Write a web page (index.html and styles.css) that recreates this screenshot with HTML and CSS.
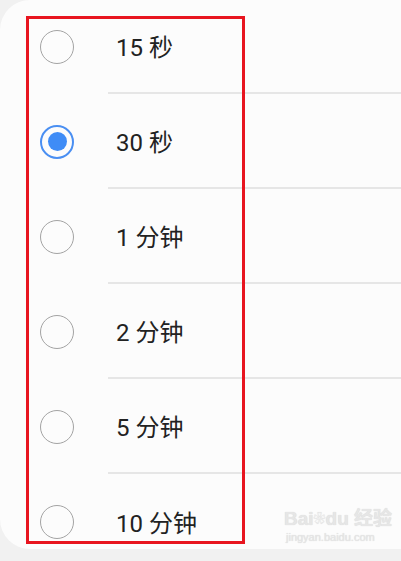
FILE: index.html
```html
<!DOCTYPE html>
<html lang="zh-CN">
<head>
  <meta charset="UTF-8" />
  <meta name="viewport" content="width=device-width, initial-scale=1.0" />
  <title>选择时长</title>
  <link rel="stylesheet" href="styles.css">
</head>
<body>
  <div class="card">
    <ul class="options">
      <li class="option">
        <span class="radio"></span>
        <span class="label">15 秒</span>
      </li>
      <li class="option">
        <span class="radio checked"></span>
        <span class="label">30 秒</span>
      </li>
      <li class="option">
        <span class="radio"></span>
        <span class="label">1 分钟</span>
      </li>
      <li class="option">
        <span class="radio"></span>
        <span class="label">2 分钟</span>
      </li>
      <li class="option">
        <span class="radio"></span>
        <span class="label">5 分钟</span>
      </li>
      <li class="option">
        <span class="radio"></span>
        <span class="label">10 分钟</span>
      </li>
    </ul>

    <div class="highlight"></div>
  </div>

  <div class="watermark">
    <div class="wm-logo">Bai<span class="paw">❀</span>du 经验</div>
    <div class="wm-url">jingyan.baidu.com</div>
  </div>
</body>
</html>
```

FILE: styles.css
```css
html, body {
  margin: 0;
  padding: 0;
  height: 100%;
}
body {
  position: relative;
  background: #f1f1f1;
  font-family: Roboto, "Noto Sans CJK SC", sans-serif;
  color: #222;
  overflow: hidden;
}
.card {
  position: relative;
  height: 549px;
  background: #fcfcfc;
  border-radius: 30px 0 0 30px;
  overflow: hidden;
}
.options {
  list-style: none;
  margin: -1px 0 0 0;
  padding: 0;
}
.option {
  display: flex;
  align-items: stretch;
  height: 95px;
}
.radio {
  flex: none;
  align-self: center;
  box-sizing: border-box;
  width: 34px;
  height: 34px;
  margin: 0 34px 0 40px;
  border: 1.5px solid #a3a3a3;
  border-radius: 50%;
  display: flex;
  align-items: center;
  justify-content: center;
}
.radio.checked {
  border: 2px solid #4a8ff2;
}
.radio.checked::after {
  content: "";
  width: 19px;
  height: 19px;
  border-radius: 50%;
  background: #3f8cf6;
}
.label {
  flex: 1;
  display: flex;
  align-items: center;
  padding-left: 8px;
  font-size: 24px;
  border-bottom: 2px solid #e6e6e6;
}
.option:last-child .label {
  border-bottom: none;
}
.highlight {
  position: absolute;
  left: 26px;
  top: 16px;
  width: 213px;
  height: 522px;
  border: 3px solid #e8151f;
}
.watermark {
  position: absolute;
  left: 284px;
  top: 508px;
  white-space: nowrap;
  color: #e6e6e6;
  text-shadow: 0 0 1px #d2d2d2;
  font-family: "Liberation Sans", "Noto Sans CJK SC", sans-serif;
}
.wm-logo {
  font-size: 19px;
  font-weight: bold;
  line-height: 22px;
}
.paw {
  font-size: 12px;
  vertical-align: top;
}
.wm-url {
  font-size: 11px;
  line-height: 14px;
  padding-left: 2px;
}
```
